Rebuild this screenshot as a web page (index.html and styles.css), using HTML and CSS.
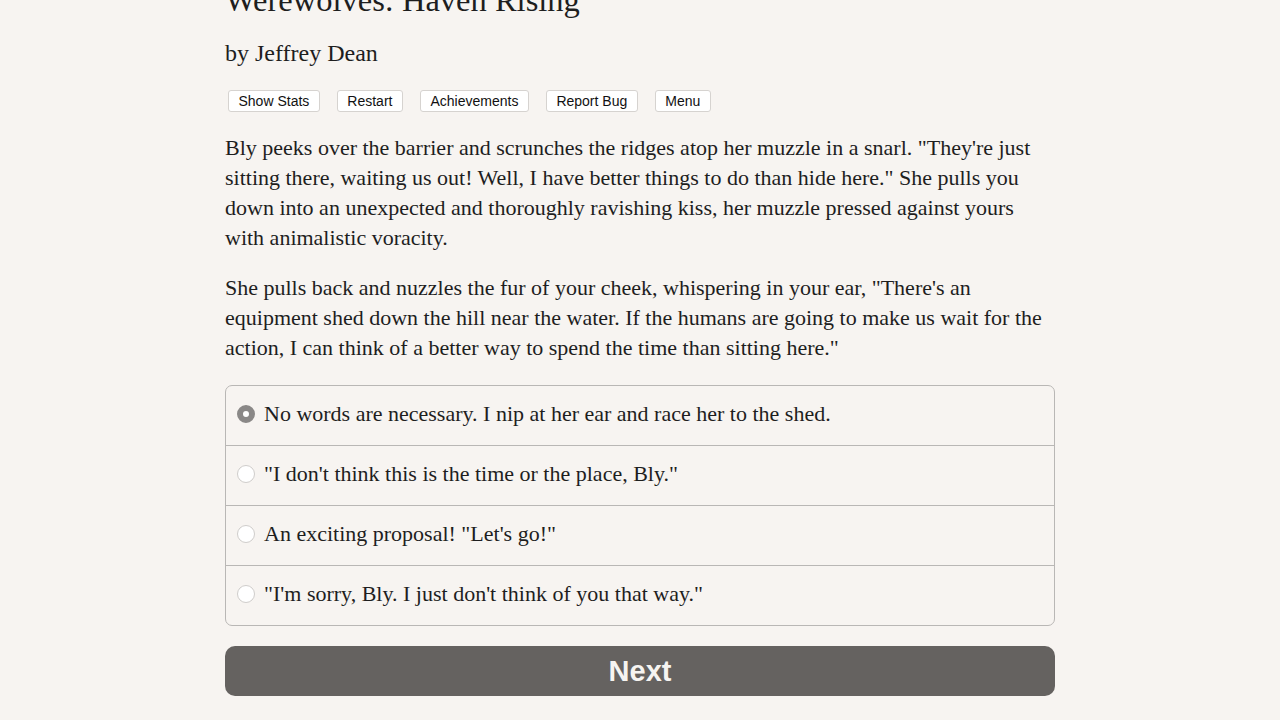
FILE: index.html
```html
<!DOCTYPE html>
<html lang="en">
<head>
    <meta charset="UTF-8">
    <meta name="viewport" content="width=device-width, initial-scale=1.0">
    <title>Werewolves: Haven Rising</title>
    <link rel="stylesheet" href="styles.css">
</head>
<body>
    <div class="container">
        <h1 class="game-title">Werewolves: Haven Rising</h1>
        <h2 class="author">by Jeffrey Dean</h2>

        <!-- Top buttons -->
        <div class="buttons">
            <button class="small-btn">Show Stats</button>
            <button class="small-btn">Restart</button>
            <button class="small-btn">Achievements</button>
            <button class="small-btn">Report Bug</button>
            <button class="small-btn">Menu</button>
        </div>

        <!-- Story text -->
        <div class="story">
            <p>Bly peeks over the barrier and scrunches the ridges atop her muzzle in a snarl. "They're just sitting there, waiting us out! Well, I have better things to do than hide here." She pulls you down into an unexpected and thoroughly ravishing kiss, her muzzle pressed against yours with animalistic voracity.</p>
            <p>She pulls back and nuzzles the fur of your cheek, whispering in your ear, "There's an equipment shed down the hill near the water. If the humans are going to make us wait for the action, I can think of a better way to spend the time than sitting here."</p>
        </div>

        <!-- Choices -->
        <div class="choices">
            <label class="choice">
                <span class="radio checked"></span>
                <span>No words are necessary. I nip at her ear and race her to the shed.</span>
            </label>
            <label class="choice">
                <span class="radio"></span>
                <span>"I don't think this is the time or the place, Bly."</span>
            </label>
            <label class="choice">
                <span class="radio"></span>
                <span>An exciting proposal! "Let's go!"</span>
            </label>
            <label class="choice">
                <span class="radio"></span>
                <span>"I'm sorry, Bly. I just don't think of you that way."</span>
            </label>
        </div>

        <button class="next-btn">Next</button>
    </div>
</body>
</html>
```

FILE: styles.css
```css
body {
    margin: 0;
    background-color: #f7f4f1;
    color: #1e1e1e;
    font-family: "Liberation Serif", "Times New Roman", serif;
}
.container {
    width: 830px;
    margin: -20px auto 0;
}
.game-title {
    margin: 0;
    font-size: 32.5px;
    font-weight: normal;
    line-height: 40px;
}
.author {
    margin: 18px 0 0;
    font-size: 24px;
    font-weight: normal;
    line-height: 30px;
}
.buttons {
    display: flex;
    gap: 17px;
    margin: 22px 0 0 3px;
}
.small-btn {
    font-family: "Liberation Sans", Arial, sans-serif;
    font-size: 14px;
    color: #111;
    background: #fff;
    border: 1px solid #d6d3d0;
    border-radius: 3px;
    padding: 2px 9.5px;
    height: 22px;
    line-height: 16px;
}
.story {
    margin-top: 21px;
}
.story p {
    margin: 0 0 20px;
    font-size: 22px;
    line-height: 30px;
}
.choices {
    margin-top: 22px;
    border: 1px solid #b9b7b5;
    border-radius: 7px;
}
.choice {
    display: flex;
    align-items: center;
    gap: 9px;
    height: 60px;
    padding: 0 0 3px 11px;
    box-sizing: border-box;
    font-size: 22px;
    border-top: 1px solid #b9b7b5;
}
.choice:first-child {
    height: 59px;
    border-top: none;
}
.radio {
    width: 18px;
    height: 18px;
    border: 1px solid #cfcdcb;
    border-radius: 50%;
    background: #fff;
    box-sizing: border-box;
    flex-shrink: 0;
}
.radio.checked {
    border: 6px solid #8a8887;
    background: #fff;
}
.next-btn {
    display: block;
    width: 100%;
    height: 50px;
    margin-top: 20px;
    background-color: #656260;
    color: #f6f4f1;
    border: none;
    border-radius: 10px;
    font-family: "Liberation Sans", Arial, sans-serif;
    font-size: 29px;
    font-weight: bold;
}
```
